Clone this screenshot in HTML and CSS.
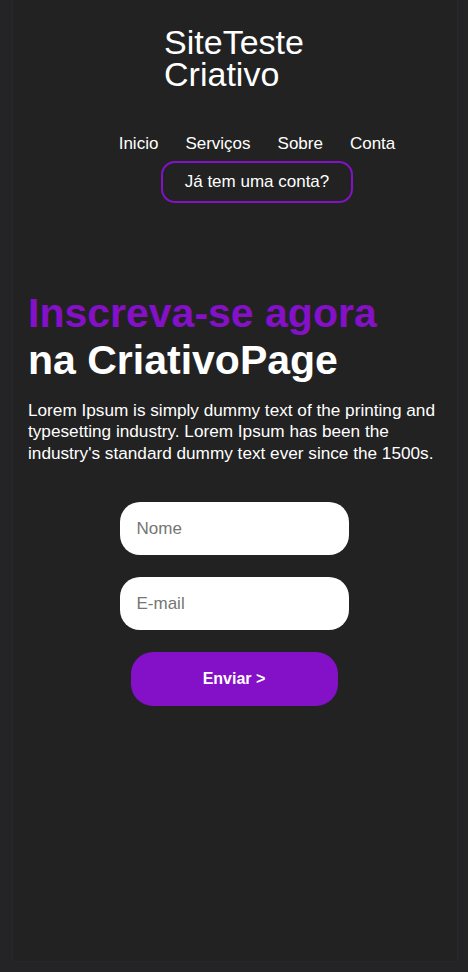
FILE: index.html
```html
<!DOCTYPE html>
<html lang="pt">
<head>
<meta charset="utf-8">
<title>SiteTeste Criativo</title>
<link rel="stylesheet" href="styles.css">
</head>
<body>
<div class="page">
  <header class="header">
    <h1 class="logo">SiteTeste<br>Criativo</h1>
    <nav class="nav">
      <ul class="menu">
        <li>Inicio</li>
        <li>Serviços</li>
        <li>Sobre</li>
        <li>Conta</li>
      </ul>
      <button class="account">Já tem uma conta?</button>
    </nav>
  </header>
  <main class="hero">
    <h2 class="title"><span class="accent">Inscreva-se agora</span><br>na CriativoPage</h2>
    <p class="text">Lorem Ipsum is simply dummy text of the printing and typesetting industry. Lorem Ipsum has been the industry's standard dummy text ever since the 1500s.</p>
    <form class="form">
      <input class="field" type="text" placeholder="Nome">
      <input class="field" type="email" placeholder="E-mail">
      <button class="send" type="button">Enviar &gt;</button>
    </form>
  </main>
</div>
</body>
</html>
```
FILE: styles.css
```css
* { box-sizing: border-box; }
html, body { margin: 0; padding: 0; }
body {
  background: #242427;
  font-family: Arial, "Liberation Sans", sans-serif;
  color: #fff;
}
.page {
  margin: 0 10px 0 12px;
  background: #222222;
  min-height: 962px;
  border-left: 1px solid #282829;
  border-right: 1px solid #29292a;
  border-bottom: 1px solid #262627;
}
.header {
  padding-top: 26px;
  display: flex;
  flex-direction: column;
  align-items: center;
}
.logo {
  margin: 0;
  font-size: 34px;
  font-weight: normal;
  line-height: 32px;
  padding-right: 2px;
}
.nav {
  margin-top: 44px;
  display: flex;
  flex-direction: column;
  align-items: center;
  padding-left: 44px;
}
.menu {
  list-style: none;
  margin: 0;
  padding: 0;
  display: flex;
  gap: 27px;
  font-size: 17px;
  line-height: 20px;
}
.account {
  margin-top: 7px;
  width: 192px;
  height: 42px;
  border: 2px solid #8410c8;
  border-radius: 14px;
  background: transparent;
  color: #fff;
  font-family: inherit;
  font-size: 17px;
}
.hero {
  padding: 87px 0 0 15px;
}
.title {
  margin: 0;
  font-size: 41px;
  line-height: 47px;
  font-weight: bold;
}
.accent { color: #8410c8; }
.text {
  margin: 16px 0 0;
  font-size: 17.2px;
  line-height: 21.4px;
  padding-right: 12px;
}
.form {
  margin-top: 38px;
  display: flex;
  flex-direction: column;
  align-items: center;
  padding-right: 17px;
}
.field {
  width: 229px;
  height: 53px;
  border: none;
  border-radius: 20px;
  background: #fff;
  padding: 0 17px;
  font-family: inherit;
  font-size: 17px;
  margin-bottom: 22px;
  outline: none;
}
.field::placeholder { color: #757575; }
.send {
  margin-top: 0;
  width: 207px;
  height: 54px;
  border: none;
  border-radius: 22px;
  background: #8410c8;
  color: #fff;
  font-family: inherit;
  font-size: 16px;
  font-weight: bold;
}
```
